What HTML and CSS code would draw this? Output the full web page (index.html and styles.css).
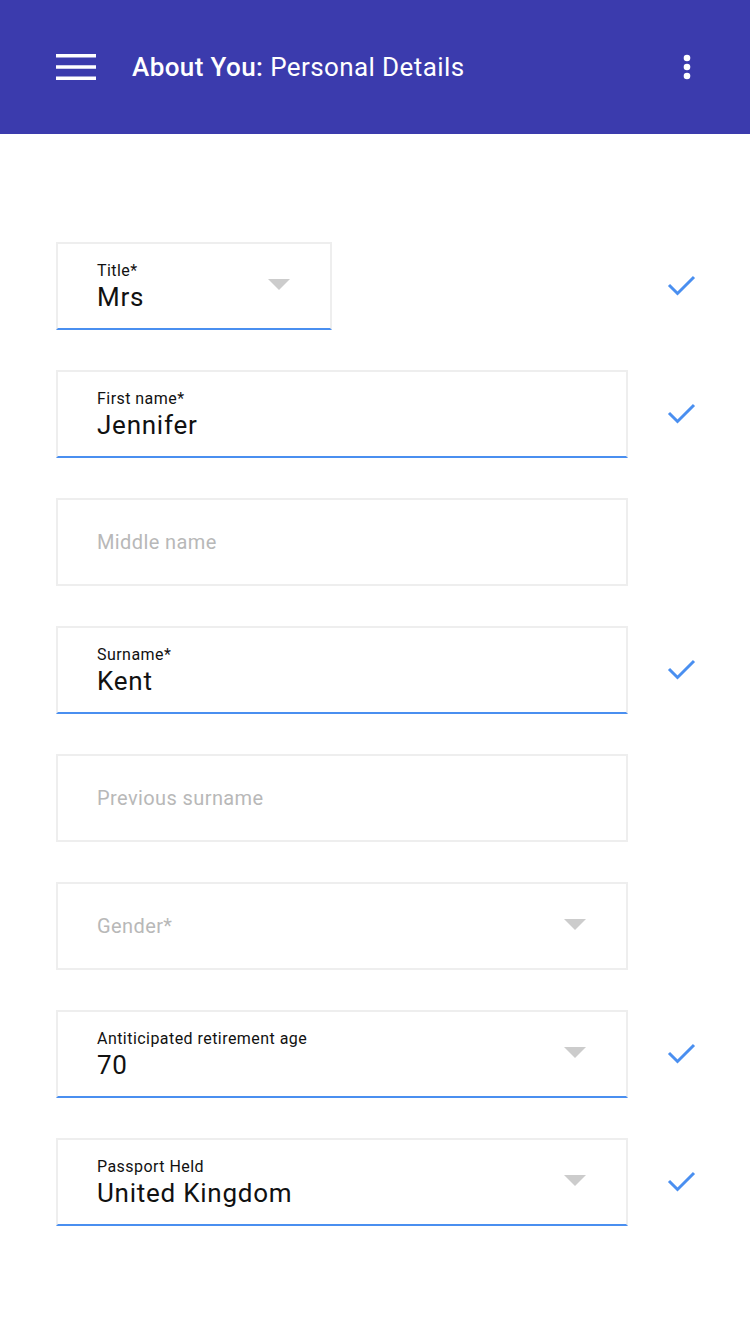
FILE: index.html
```html
<!DOCTYPE html>
<html lang="en">
<head>
    <meta charset="UTF-8">
    <meta name="viewport" content="width=device-width, initial-scale=1.0">
    <title>About You: Personal Details</title>
    <link rel="stylesheet" href="styles.css">
</head>
<body>
    <header class="app-bar">
        <svg class="menu-icon" width="40" height="26" viewBox="0 0 40 26">
            <rect x="0" y="0" width="40" height="3.5" fill="#fff"></rect>
            <rect x="0" y="11.25" width="40" height="3.5" fill="#fff"></rect>
            <rect x="0" y="22.5" width="40" height="3.5" fill="#fff"></rect>
        </svg>
        <h1 class="app-title"><strong>About You:</strong> Personal Details</h1>
        <svg class="more-icon" width="8" height="26" viewBox="0 0 8 26">
            <circle cx="4" cy="4" r="3.3" fill="#fff"></circle>
            <circle cx="4" cy="13" r="3.3" fill="#fff"></circle>
            <circle cx="4" cy="22" r="3.3" fill="#fff"></circle>
        </svg>
    </header>

    <main class="form">
        <div class="form-row">
            <div class="field field-short filled">
                <div class="field-text">
                    <span class="field-label">Title*</span>
                    <span class="field-value">Mrs</span>
                </div>
                <span class="caret"></span>
            </div>
            <svg class="check" width="30" height="24" viewBox="0 0 30 24"><path d="M2 11 L10.5 19.5 L27 3" fill="none" stroke="#4a8ff0" stroke-width="3"/></svg>
        </div>

        <div class="form-row">
            <div class="field filled">
                <div class="field-text">
                    <span class="field-label">First name*</span>
                    <span class="field-value">Jennifer</span>
                </div>
            </div>
            <svg class="check" width="30" height="24" viewBox="0 0 30 24"><path d="M2 11 L10.5 19.5 L27 3" fill="none" stroke="#4a8ff0" stroke-width="3"/></svg>
        </div>

        <div class="form-row">
            <div class="field">
                <span class="field-placeholder">Middle name</span>
            </div>
        </div>

        <div class="form-row">
            <div class="field filled">
                <div class="field-text">
                    <span class="field-label">Surname*</span>
                    <span class="field-value">Kent</span>
                </div>
            </div>
            <svg class="check" width="30" height="24" viewBox="0 0 30 24"><path d="M2 11 L10.5 19.5 L27 3" fill="none" stroke="#4a8ff0" stroke-width="3"/></svg>
        </div>

        <div class="form-row">
            <div class="field">
                <span class="field-placeholder">Previous surname</span>
            </div>
        </div>

        <div class="form-row">
            <div class="field">
                <span class="field-placeholder">Gender*</span>
                <span class="caret"></span>
            </div>
        </div>

        <div class="form-row">
            <div class="field filled">
                <div class="field-text">
                    <span class="field-label">Antiticipated retirement age</span>
                    <span class="field-value">70</span>
                </div>
                <span class="caret"></span>
            </div>
            <svg class="check" width="30" height="24" viewBox="0 0 30 24"><path d="M2 11 L10.5 19.5 L27 3" fill="none" stroke="#4a8ff0" stroke-width="3"/></svg>
        </div>

        <div class="form-row">
            <div class="field filled">
                <div class="field-text">
                    <span class="field-label">Passport Held</span>
                    <span class="field-value">United Kingdom</span>
                </div>
                <span class="caret"></span>
            </div>
            <svg class="check" width="30" height="24" viewBox="0 0 30 24"><path d="M2 11 L10.5 19.5 L27 3" fill="none" stroke="#4a8ff0" stroke-width="3"/></svg>
        </div>
    </main>
</body>
</html>
```

FILE: styles.css
```css
body {
    margin: 0;
    font-family: 'Roboto', 'Liberation Sans', sans-serif;
    background-color: #fff;
    color: #111;
}

.app-bar {
    height: 134px;
    background-color: #3b3bad;
    display: flex;
    align-items: center;
    padding: 0 59px 0 56px;
    box-sizing: border-box;
}

.menu-icon {
    flex-shrink: 0;
}

.app-title {
    flex: 1;
    margin: 0 0 0 36px;
    font-size: 26px;
    font-weight: 400;
    color: #fff;
    letter-spacing: 0.4px;
}

.app-title strong {
    font-weight: 500;
}

.more-icon {
    flex-shrink: 0;
}

.form {
    padding: 108px 0 0 56px;
    display: flex;
    flex-direction: column;
    gap: 40px;
}

.form-row {
    display: grid;
    grid-template-columns: 572px 30px;
    column-gap: 39px;
    align-items: center;
}

.field {
    width: 572px;
    height: 88px;
    box-sizing: border-box;
    border: 2px solid #eeeeee;
    padding: 0 40px 0 39px;
    display: flex;
    align-items: center;
    justify-content: space-between;
}

.field-short {
    width: 276px;
}

.field.filled {
    border-bottom-color: #4a8ff0;
}

.field-text {
    display: flex;
    flex-direction: column;
    padding-top: 2px;
}

.field-label {
    font-size: 16px;
    line-height: 20px;
    color: #111;
    letter-spacing: 0.45px;
}

.field-value {
    font-size: 26px;
    line-height: 32px;
    color: #111;
    letter-spacing: 0.75px;
}

.field-placeholder {
    font-size: 20px;
    color: #b8b8b8;
    letter-spacing: 0.4px;
}

.caret {
    width: 0;
    height: 0;
    border-left: 11px solid transparent;
    border-right: 11px solid transparent;
    border-top: 11px solid #cccccc;
    margin-top: -4px;
}
```
